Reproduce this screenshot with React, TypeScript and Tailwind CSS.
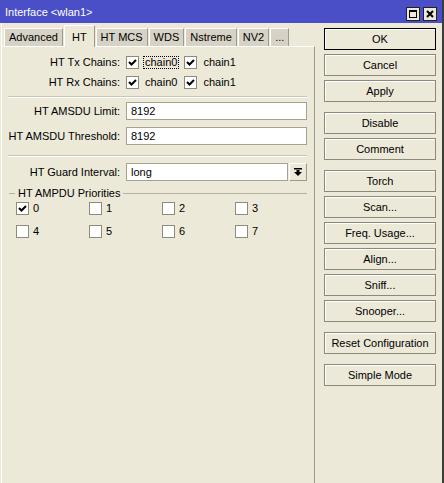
import React from 'react';

const TABS = ['Advanced', 'HT', 'HT MCS', 'WDS', 'Nstreme', 'NV2', '...'];

const BUTTON_GROUPS = [
  ['OK', 'Cancel', 'Apply'],
  ['Disable', 'Comment'],
  ['Torch', 'Scan...', 'Freq. Usage...', 'Align...', 'Sniff...', 'Snooper...'],
  ['Reset Configuration'],
  ['Simple Mode'],
];

function CheckBox({ checked }: { checked?: boolean }) {
  return (
    <div className="w-[13px] h-[13px] shrink-0 bg-white border border-[#8e8b7e] flex items-center justify-center">
      {checked && (
        <svg width="9" height="9" viewBox="0 0 9 9">
          <path d="M1 4 L3.5 6.5 L8 2" stroke="#000" strokeWidth="2" fill="none" />
        </svg>
      )}
    </div>
  );
}

function Row({ label, className = '', children }: { label: string; className?: string; children: React.ReactNode }) {
  return (
    <div className={`flex items-center ${className}`}>
      <div className="w-[118px] shrink-0 flex justify-end">
        <span className="whitespace-nowrap">{label}</span>
      </div>
      <div className="ml-[6px] mr-[7px] flex-1 flex items-center">{children}</div>
    </div>
  );
}

function Separator({ className = '' }: { className?: string }) {
  return (
    <div className={`ml-[6px] mr-[7px] ${className}`}>
      <div className="h-px bg-[#c9c6b6]" />
      <div className="h-px bg-white" />
    </div>
  );
}

function TextField({ value }: { value: string }) {
  return (
    <div className="flex-1 h-[18px] bg-white border border-[#a5a292] flex items-center pl-[4px]">{value}</div>
  );
}

export default function App() {
  return (
    <div className="w-[444px] h-[483px] flex flex-col bg-[#ece9d8] border-r-2 border-[#3c3c3c] font-['Liberation_Sans',sans-serif] text-[11px] text-black overflow-hidden">
      {/* title bar */}
      <div className="h-[23px] shrink-0 bg-[#4a4fc7] flex items-center pl-[5px] pr-[5px]">
        <span className="text-white flex-1 pt-px">Interface &lt;wlan1&gt;</span>
        <div className="flex gap-[3px] mt-[5px]">
          <div className="w-[14px] h-[14px] bg-[#ece9d8] border border-[#222] flex items-center justify-center">
            <div className="w-[8px] h-[8px] border border-black border-t-2" />
          </div>
          <div className="w-[14px] h-[14px] bg-[#ece9d8] border border-[#222] flex items-center justify-center">
            <svg width="8" height="8" viewBox="0 0 8 8">
              <path d="M1 1 L7 7 M7 1 L1 7" stroke="#000" strokeWidth="2" />
            </svg>
          </div>
        </div>
      </div>

      <div className="flex flex-1 ml-px border-l border-white">
        {/* left: tabs + panel */}
        <div className="w-[313px] shrink-0 flex flex-col pt-[2px]">
          <div className="flex items-end h-[21px] pl-[2px] gap-px relative z-10">
            {TABS.map((t) =>
              t === 'HT' ? (
                <div
                  key={t}
                  className="h-[22px] -mb-px px-[7px] bg-[#ece9d8] border-t border-l border-white border-r border-r-[#9d9a8e] flex items-start pt-[3px]"
                >
                  {t}
                </div>
              ) : (
                <div
                  key={t}
                  className="h-[18px] px-[4px] bg-[#d6d3c6] border-t border-l border-white border-r border-r-[#9d9a8e] flex items-center"
                >
                  {t}
                </div>
              )
            )}
          </div>
          <div className="flex-1 border-t border-white border-r border-r-[#9d9a8e] flex flex-col pt-[5px]">
            <Row label="HT Tx Chains:" className="h-[20px]">
              <CheckBox checked />
              <span className="ml-[4px] px-px border border-dotted border-black leading-[11px]">chain0</span>
              <div className="ml-[5px]"><CheckBox checked /></div>
              <span className="ml-[6px]">chain1</span>
            </Row>
            <Row label="HT Rx Chains:" className="h-[20px]">
              <CheckBox checked />
              <span className="ml-[5px] px-px">chain0</span>
              <div className="ml-[6px]"><CheckBox checked /></div>
              <span className="ml-[6px]">chain1</span>
            </Row>
            <Separator className="mt-[4px]" />
            <Row label="HT AMSDU Limit:" className="mt-[4px]">
              <TextField value="8192" />
            </Row>
            <Row label="HT AMSDU Threshold:" className="mt-[7px]">
              <TextField value="8192" />
            </Row>
            <Separator className="mt-[10px]" />
            <Row label="HT Guard Interval:" className="mt-[6px]">
              <TextField value="long" />
              <div className="ml-px w-[18px] h-[18px] bg-[#ece9d8] border border-white border-r-[#9d9a8e] border-b-[#9d9a8e] flex items-center justify-center">
                <svg width="8" height="8" viewBox="0 0 8 8">
                  <rect x="0" y="0" width="8" height="1.5" fill="#000" />
                  <rect x="2.5" y="2" width="3" height="2" fill="#000" />
                  <path d="M0 4 L8 4 L4 8 Z" fill="#000" />
                </svg>
              </div>
            </Row>
            <div className="mt-[6px] h-[12px] flex items-center ml-[7px] mr-[7px]">
              <div className="w-[6px] h-px bg-[#b5b2a4]" />
              <span className="px-[3px] whitespace-nowrap">HT AMPDU Priorities</span>
              <div className="flex-1 h-px bg-[#b5b2a4]" />
            </div>
            <div className="grid grid-cols-[73px_73px_73px_73px] pl-[14px] mt-[3px] gap-y-[10px]">
              {['0', '1', '2', '3', '4', '5', '6', '7'].map((n) => (
                <div key={n} className="flex items-center h-[13px]">
                  <CheckBox checked={n === '0'} />
                  <span className="ml-[4px]">{n}</span>
                </div>
              ))}
            </div>
          </div>
        </div>

        {/* right: buttons */}
        <div className="flex-1 flex flex-col pl-[9px] pt-[5px] gap-[10px]">
          {BUTTON_GROUPS.map((group, gi) => (
            <div key={gi} className="flex flex-col gap-[4px]">
              {group.map((b) => (
                <div
                  key={b}
                  className={`w-[112px] h-[22px] flex items-center justify-center bg-[#ece9d8] border ${
                    b === 'OK' ? 'border-black' : 'border-[#8b887c]'
                  } shadow-[inset_1px_1px_0_#fff]`}
                >
                  {b}
                </div>
              ))}
            </div>
          ))}
        </div>
      </div>
    </div>
  );
}
